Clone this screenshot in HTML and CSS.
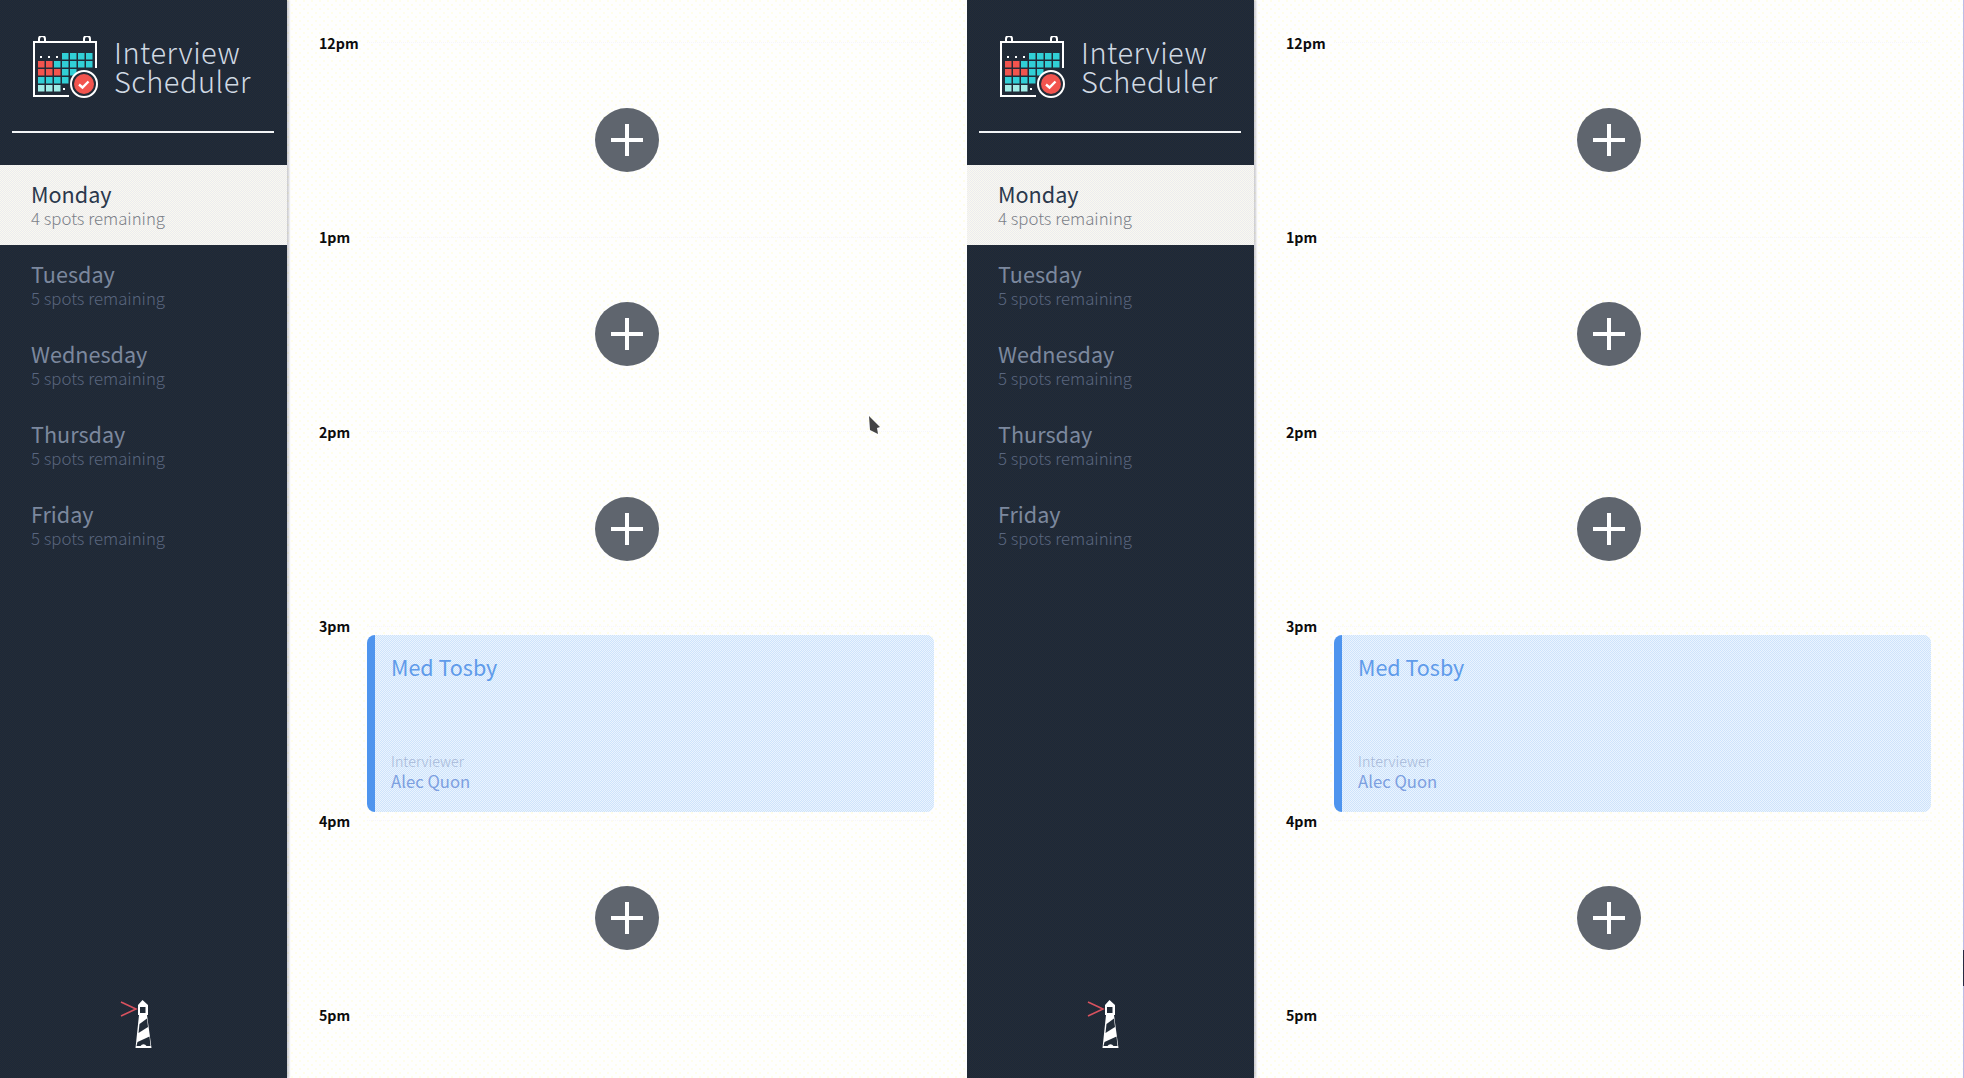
FILE: index.html
```html
<!DOCTYPE html>
<html>
	<head>
		<meta charset="UTF-8">
		<title>Interview Scheduler</title>
		<link rel="stylesheet" href="styles.css">
	</head>
	<body>
		<svg class="sprite">
			<symbol id="logo" viewBox="0 0 66 62">
				<g fill="none" stroke="#fff" stroke-width="2">
					<path d="M37 60H2V6H64V32"/>
					<path d="M7 7V3a3 3 0 0 1 6 0V7M52 7V3a3 3 0 0 1 6 0V7"/>
				</g>
				<g fill="#fff">
					<rect x="8" y="20" width="2" height="2"/><rect x="16" y="20" width="2" height="2"/><rect x="24" y="20" width="2" height="2"/>
					<rect x="31" y="52" width="2" height="2"/>
				</g>
				<g fill="#31cfd6">
					<rect x="30" y="17" width="6.500" height="6.500"/><rect x="38" y="17" width="6.500" height="6.500"/><rect x="46" y="17" width="6.500" height="6.500"/><rect x="54" y="17" width="6.500" height="6.500"/>
					<rect x="22" y="25" width="6.500" height="6.500"/><rect x="30" y="25" width="6.500" height="6.500"/><rect x="38" y="25" width="6.500" height="6.500"/><rect x="46" y="25" width="6.500" height="6.500"/><rect x="54" y="25" width="6.500" height="6.500"/>
					<rect x="30" y="33" width="6.500" height="6.500"/><rect x="38" y="33" width="6.500" height="6.500"/>
					<rect x="6" y="41" width="6.500" height="6.500"/><rect x="14" y="41" width="6.500" height="6.500"/><rect x="22" y="41" width="6.500" height="6.500"/><rect x="30" y="41" width="6.500" height="6.500"/>
				</g>
				<g fill="#a0ece6">
					<rect x="6" y="49" width="6.500" height="6.500"/><rect x="14" y="49" width="6.500" height="6.500"/><rect x="22" y="49" width="6.500" height="6.500"/>
				</g>
				<g fill="#f2544e">
					<rect x="6" y="25" width="6.500" height="6.500"/><rect x="14" y="25" width="6.500" height="6.500"/>
					<rect x="6" y="33" width="6.500" height="6.500"/><rect x="14" y="33" width="6.500" height="6.500"/><rect x="22" y="33" width="6.500" height="6.500"/>
				</g>
				<circle cx="52" cy="48" r="13" fill="#222c38" stroke="#fff" stroke-width="2"/>
				<circle cx="52" cy="48" r="10" fill="#f2544e"/>
				<path d="M47 48.500l3.500 3 6-6" fill="none" stroke="#fff" stroke-width="2.400"/>
			</symbol>
			<symbol id="lighthouse" viewBox="0 0 32 50">
				<path d="M1 2L16 9L1 16" fill="none" stroke="#d9525f" stroke-width="1.600"/>
				<path d="M22.500 0L28 5V15H27L31.500 48H15.500L19 15H18V5z" fill="#fff"/>
				<rect x="20" y="7" width="5.500" height="6" fill="#222c38"/>
				<path d="M19.500 24L27 18.500L28 27L18.500 33z" fill="#222c38"/>
				<path d="M17.500 42L29.500 36.500L30.500 46H26.500a3.500 3.500 0 0 0-6 0H16.500z" fill="#222c38"/>
			</symbol>
			<symbol id="plus" viewBox="0 0 32 32">
				<path d="M16 0V32M0 16H32" stroke="#fff" stroke-width="4"/>
			</symbol>
		</svg>
		<div class="frame frame-left">
			<nav class="sidebar">
				<div class="brand">
					<svg class="brand-icon" width="66" height="62"><use href="#logo"/></svg>
					<div class="brand-name">Interview<br>Scheduler</div>
				</div>
				<hr class="sidebar-rule">
				<ul class="days">
					<li class="day day-selected"><h2>Monday</h2><p>4 spots remaining</p></li>
					<li class="day"><h2>Tuesday</h2><p>5 spots remaining</p></li>
					<li class="day"><h2>Wednesday</h2><p>5 spots remaining</p></li>
					<li class="day"><h2>Thursday</h2><p>5 spots remaining</p></li>
					<li class="day"><h2>Friday</h2><p>5 spots remaining</p></li>
				</ul>
				<svg class="lighthouse" width="32" height="50"><use href="#lighthouse"/></svg>
			</nav>
			<main class="schedule">
				<section class="slot"><header class="slot-time"><h4>12pm</h4><hr></header><div class="slot-body"><button class="add"><svg width="32" height="32"><use href="#plus"/></svg></button></div></section>
				<section class="slot"><header class="slot-time"><h4>1pm</h4><hr></header><div class="slot-body"><button class="add"><svg width="32" height="32"><use href="#plus"/></svg></button></div></section>
				<section class="slot"><header class="slot-time"><h4>2pm</h4><hr></header><div class="slot-body"><button class="add"><svg width="32" height="32"><use href="#plus"/></svg></button></div></section>
				<section class="slot"><header class="slot-time"><h4>3pm</h4><hr></header><div class="slot-body"><article class="card"><h3>Med Tosby</h3><div><p class="card-label">Interviewer</p><p class="card-name">Alec Quon</p></div></article></div></section>
				<section class="slot"><header class="slot-time"><h4>4pm</h4><hr></header><div class="slot-body"><button class="add"><svg width="32" height="32"><use href="#plus"/></svg></button></div></section>
				<section class="slot"><header class="slot-time"><h4>5pm</h4><hr></header></section>
			</main>
		</div>
		<div class="frame frame-right">
			<nav class="sidebar">
				<div class="brand">
					<svg class="brand-icon" width="66" height="62"><use href="#logo"/></svg>
					<div class="brand-name">Interview<br>Scheduler</div>
				</div>
				<hr class="sidebar-rule">
				<ul class="days">
					<li class="day day-selected"><h2>Monday</h2><p>4 spots remaining</p></li>
					<li class="day"><h2>Tuesday</h2><p>5 spots remaining</p></li>
					<li class="day"><h2>Wednesday</h2><p>5 spots remaining</p></li>
					<li class="day"><h2>Thursday</h2><p>5 spots remaining</p></li>
					<li class="day"><h2>Friday</h2><p>5 spots remaining</p></li>
				</ul>
				<svg class="lighthouse" width="32" height="50"><use href="#lighthouse"/></svg>
			</nav>
			<main class="schedule">
				<section class="slot"><header class="slot-time"><h4>12pm</h4><hr></header><div class="slot-body"><button class="add"><svg width="32" height="32"><use href="#plus"/></svg></button></div></section>
				<section class="slot"><header class="slot-time"><h4>1pm</h4><hr></header><div class="slot-body"><button class="add"><svg width="32" height="32"><use href="#plus"/></svg></button></div></section>
				<section class="slot"><header class="slot-time"><h4>2pm</h4><hr></header><div class="slot-body"><button class="add"><svg width="32" height="32"><use href="#plus"/></svg></button></div></section>
				<section class="slot"><header class="slot-time"><h4>3pm</h4><hr></header><div class="slot-body"><article class="card"><h3>Med Tosby</h3><div><p class="card-label">Interviewer</p><p class="card-name">Alec Quon</p></div></article></div></section>
				<section class="slot"><header class="slot-time"><h4>4pm</h4><hr></header><div class="slot-body"><button class="add"><svg width="32" height="32"><use href="#plus"/></svg></button></div></section>
				<section class="slot"><header class="slot-time"><h4>5pm</h4><hr></header></section>
			</main>
		</div>
		<svg class="cursor" width="14" height="20" viewBox="0 0 14 20"><path d="M1 1L12 12L9 13L10 19L6 17L2 15z" fill="#444"/></svg>
		<div class="screen-edge"></div>
	</body>
</html>
```

FILE: styles.css
```css
* {
	margin: 0;
	padding: 0;
	box-sizing: border-box;
}
html, body {
	height: 100%;
	overflow: hidden;
}
body {
	display: flex;
	font-family: "Noto Sans CJK SC", "Noto Sans", sans-serif;
	background-color: #fff;
}
.sprite {
	display: none;
}
.frame {
	display: flex;
	height: 100%;
}
.frame-left {
	width: 967px;
}
.frame-right {
	flex: 1;
}
.sidebar {
	position: relative;
	z-index: 1;
	width: 287px;
	flex-shrink: 0;
	display: flex;
	flex-direction: column;
	color: #fff;
	background-color: #212b38;
	background-image: repeating-conic-gradient(#1b283a 0 25%, #262c34 0 50%);
	background-size: 2px 2px;
	box-shadow: 2px 0 2px rgba(90, 90, 110, .3);
}
.brand {
	display: flex;
	align-items: flex-start;
	height: 131px;
	padding: 36px 0 0 32px;
}
.brand-name {
	margin: 1px 0 0 16px;
	font-size: 29px;
	font-weight: 200;
	line-height: 29px;
	letter-spacing: .5px;
	color: #d0d9e3;
}
.sidebar-rule {
	width: 262px;
	margin-left: 12px;
	border: none;
	border-top: 2px solid #f2f4f6;
}
.days {
	list-style: none;
	margin-top: 32px;
}
.day {
	height: 80px;
	padding: 14px 31px 0;
}
.day h2 {
	font-size: 21.600px;
	font-weight: 400;
	line-height: 29px;
	color: #7c889e;
}
.day p {
	font-size: 16.800px;
	font-weight: 300;
	line-height: 21px;
	color: #5a667f;
}
.day-selected {
	background-color: #f3f3f2;
	background-image: repeating-conic-gradient(#faf9ee 0 25%, #ebebf0 0 50%);
	background-size: 2px 2px;
}
.day-selected h2 {
	color: #2a384c;
}
.day-selected p {
	color: #7b7f88;
}
.lighthouse {
	margin: auto 0 28px 120px;
}
.schedule {
	flex: 1;
	height: 100%;
	overflow: hidden;
	padding: 34px 33px 0 32px;
	background-color: #fefefe;
	background-image:
		radial-gradient(circle at 1px 1px, #fffcd0 .65px, transparent .75px),
		radial-gradient(circle at 5px 5px, #fffcd0 .65px, transparent .75px);
	background-size: 8px 8px;
}
.slot {
	height: 194.600px;
}
.slot-time {
	display: flex;
	align-items: center;
	height: 17px;
}
.slot-time h4 {
	width: 48px;
	font-size: 14.200px;
	font-weight: 700;
	color: #0c0c0c;
}
.slot-time hr {
	flex: 1;
	border: none;
	border-top: 1px dotted #f7f6fa;
}
.slot-body {
	display: flex;
	justify-content: center;
	align-items: center;
	height: 177px;
}
.add {
	width: 64px;
	height: 64px;
	display: flex;
	align-items: center;
	justify-content: center;
	border: none;
	border-radius: 50%;
	background-color: #5f656e;
}
.card {
	align-self: stretch;
	flex: 1;
	display: flex;
	flex-direction: column;
	justify-content: space-between;
	margin-left: 48px;
	padding: 17px 0 19px 16px;
	border-left: 8px solid #4e94ee;
	border-radius: 8px;
	background-color: #dcecfd;
	background-image: repeating-conic-gradient(#cde3fb 0 25%, #ebf4fe 0 50%);
	background-size: 2px 2px;
	color: #5f9bea;
}
.card h3 {
	font-size: 21.500px;
	font-weight: 400;
	line-height: 30px;
}
.card-label {
	font-size: 14.300px;
	font-weight: 300;
	line-height: 19px;
	color: #a6b8d8;
}
.card-name {
	font-size: 16.700px;
	font-weight: 400;
	line-height: 23px;
	color: #7c9fe0;
}
.cursor {
	position: absolute;
	left: 868px;
	top: 415px;
	z-index: 2;
}
.screen-edge {
	position: absolute;
	top: 0;
	right: 0;
	width: 1px;
	height: 100%;
	background: linear-gradient(#bcbce6 0 950px, #2a2a44 950px 986px, #bcbce6 986px);
}
```
